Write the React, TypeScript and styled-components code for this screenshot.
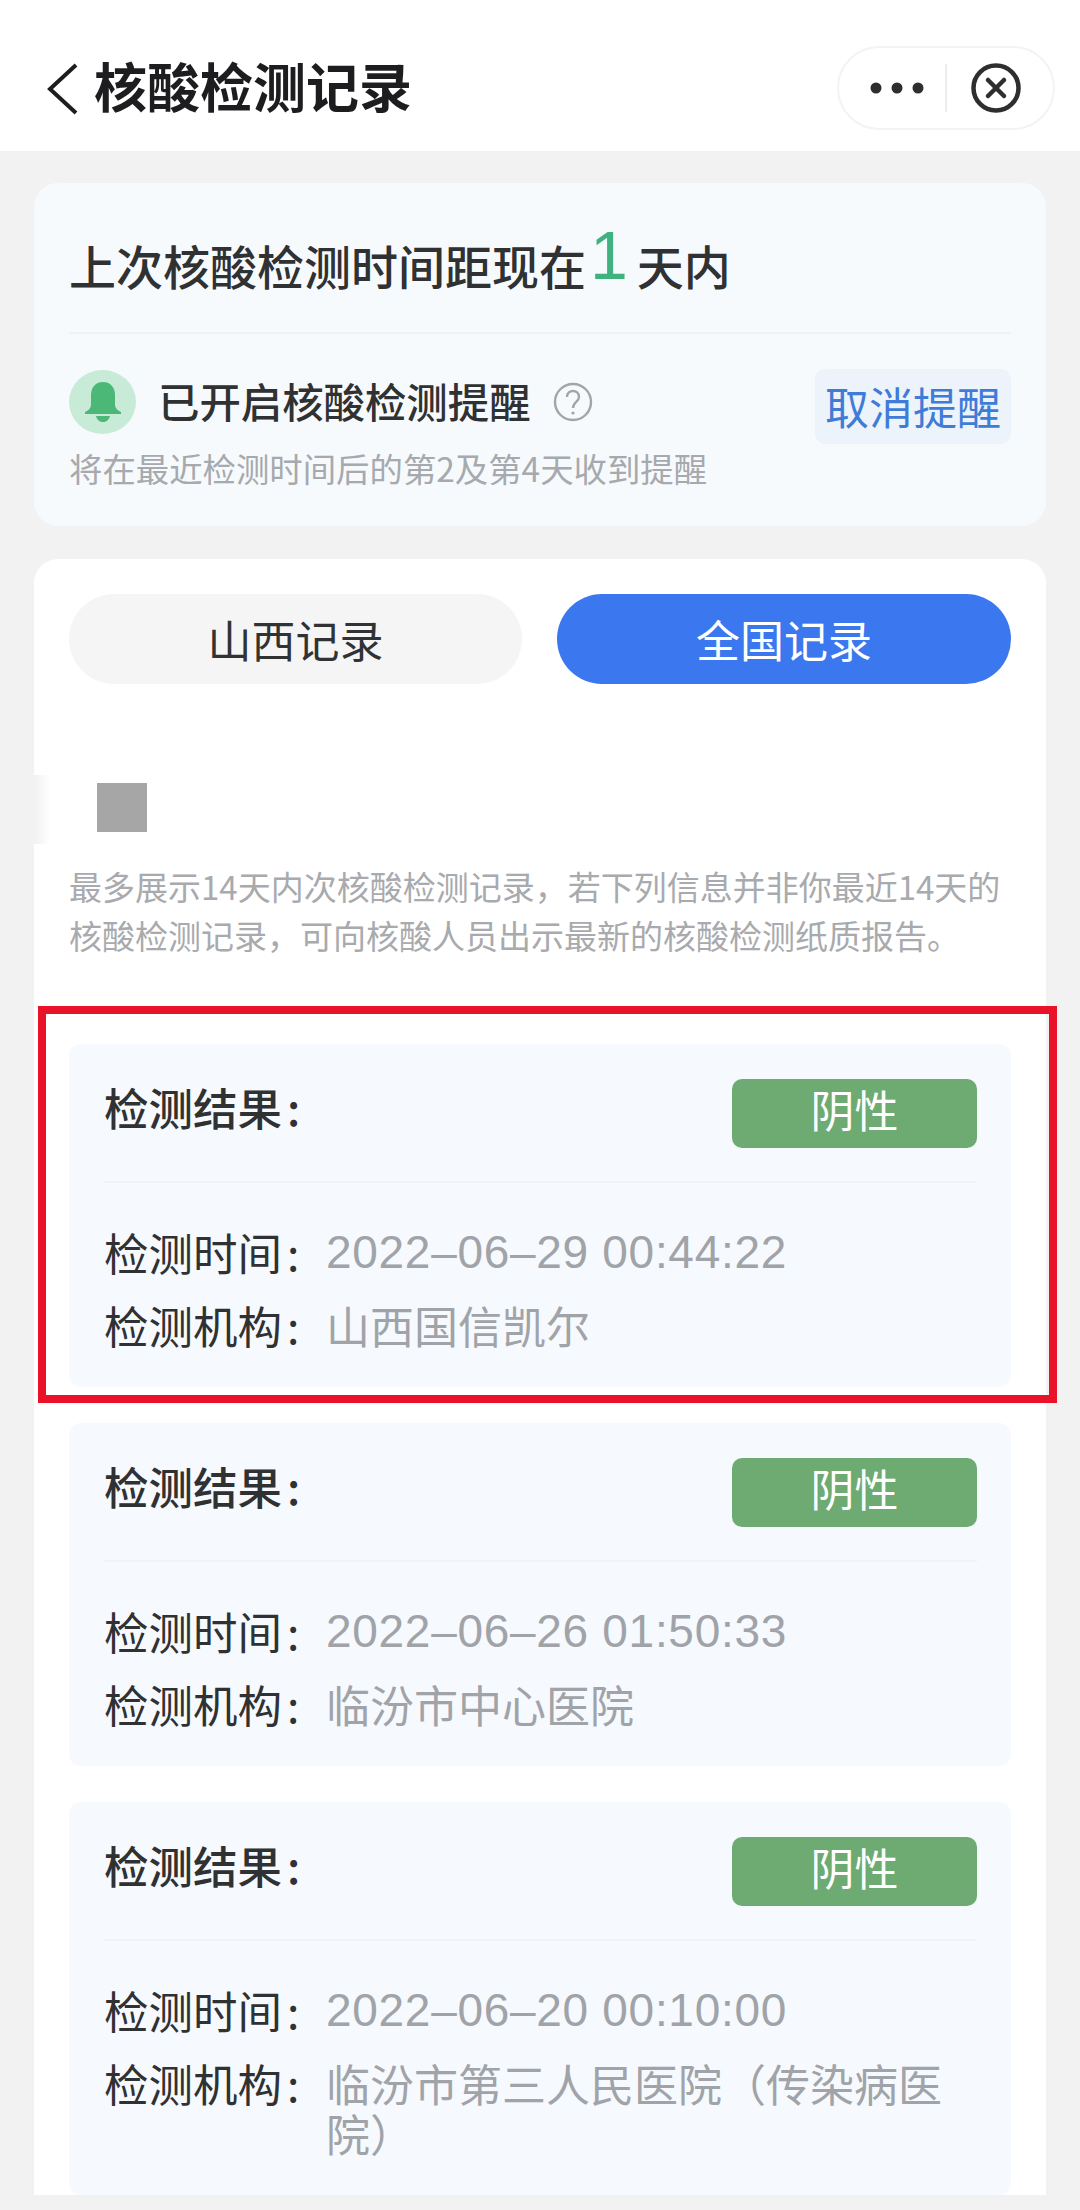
import React from "react";
import styled, { createGlobalStyle } from "styled-components";

const GlobalStyle = createGlobalStyle`
  html, body {
    margin: 0;
    padding: 0;
    height: 2210px;
    overflow: hidden;
    background: #f2f2f2;
  }
  * {
    box-sizing: border-box;
  }
  body {
    font-family: "Noto Sans CJK SC", "Liberation Sans", sans-serif;
    color: #2f3133;
  }
`;

const Header = styled.header`
  height: 151px;
  background: #fff;
  display: flex;
  align-items: center;
  padding: 25px 25px 0 46px;
`;

const BackIcon = styled.svg`
  width: 34px;
  height: 54px;
  margin-right: 14px;
  margin-top: 2px;
  flex: none;
`;

const Title = styled.h1`
  margin: 0 0 7px;
  font-size: 53px;
  line-height: 60px;
  font-weight: 700;
  color: #1d1d1f;
  flex: 1;
`;

const Capsule = styled.div`
  width: 218px;
  height: 84px;
  border: 2px solid #f3f3f3;
  border-radius: 42px;
  display: flex;
  align-items: center;
  padding-left: 31px;
`;

const Dots = styled.svg`
  width: 54px;
  height: 12px;
  flex: none;
`;

const CapsuleDivider = styled.span`
  width: 2px;
  height: 48px;
  background: #ececec;
  margin: 0 24px 0 21px;
  flex: none;
`;

const CloseIcon = styled.svg`
  width: 50px;
  height: 50px;
  flex: none;
`;

const Main = styled.main`
  padding: 32px 34px 0;
  display: flex;
  flex-direction: column;
  gap: 33px;
`;

const SummaryCard = styled.section`
  background: #f7fafd;
  border-radius: 24px;
  padding: 0 35px 38px;
  height: 343px;
`;

const Headline = styled.div`
  height: 151px;
  padding-top: 52px;
  border-bottom: 2px solid #eff1f3;
  font-size: 47px;
  line-height: 60px;
  font-weight: 500;
  white-space: nowrap;
`;

const Days = styled.span`
  display: inline-block;
  font-family: "Liberation Sans", sans-serif;
  font-size: 68px;
  line-height: 0;
  font-weight: 400;
  color: #3fb27f;
  margin: 0 9px 0 4px;
  vertical-align: 6px;
`;

const ReminderRow = styled.div`
  margin-top: 35px;
  display: flex;
  align-items: flex-start;
  justify-content: space-between;
`;

const ReminderLeft = styled.div`
  display: flex;
  align-items: center;
  height: 66px;
`;

const BellBadge = styled.span`
  width: 67px;
  height: 64px;
  border-radius: 50%;
  background: #c8ebd8;
  display: flex;
  align-items: center;
  justify-content: center;
  margin-right: 22px;
`;

const ReminderTitle = styled.span`
  font-size: 41.4px;
  line-height: 52px;
  font-weight: 500;
  white-space: nowrap;
  margin-bottom: 4px;
`;

const HelpIcon = styled.svg`
  width: 40px;
  height: 40px;
  margin-left: 22px;
`;

const CancelButton = styled.button`
  width: 196px;
  height: 75px;
  border: none;
  border-radius: 10px;
  background: #edf3fb;
  color: #3f7cd8;
  font-family: inherit;
  font-size: 44px;
  line-height: 75px;
  padding: 0;
  white-space: nowrap;
`;

const ReminderNote = styled.p`
  margin: 4px 0 0;
  font-size: 33.4px;
  line-height: 40px;
  color: #a6a9ad;
  white-space: nowrap;
`;

const RecordsCard = styled.section`
  background: #fff;
  border-radius: 24px 24px 0 0;
  padding: 35px 35px 0;
  position: relative;
`;

const EdgeSmear = styled.span`
  position: absolute;
  left: 0;
  top: 216px;
  width: 16px;
  height: 69px;
  background: linear-gradient(to right, #f1f1f1, #fff);
`;

const Tabs = styled.div`
  display: grid;
  grid-template-columns: 453px 454px;
  justify-content: space-between;
`;

const Tab = styled.button<{ $active?: boolean }>`
  height: 90px;
  border: none;
  border-radius: 45px;
  background: ${(props) => (props.$active ? "#3b77ee" : "#f5f5f5")};
  color: ${(props) => (props.$active ? "#fff" : "#303234")};
  font-family: inherit;
  font-size: 44px;
  padding: 0;
`;

const MaskedBlock = styled.div`
  width: 50px;
  height: 49px;
  margin: 99px 0 0 28px;
  background: #a6a6a6;
`;

const Notice = styled.p`
  margin: 30px 0 84px;
  font-size: 33px;
  line-height: 49px;
  color: #a8aaae;
`;

const RecordList = styled.div`
  display: flex;
  flex-direction: column;
  gap: 36px;
`;

const RecordCard = styled.article<{ $marked?: boolean }>`
  position: relative;
  background: #f6f9fd;
  border-radius: 12px;
  padding: 35px 34px 37px 35px;
  ${(props) =>
    props.$marked &&
    `&::after {
      content: "";
      position: absolute;
      left: -31px;
      right: -46px;
      top: -38px;
      bottom: -16px;
      border: 8px solid #ea1228;
      pointer-events: none;
    }`}
`;

const ResultRow = styled.div`
  display: flex;
  align-items: flex-start;
  justify-content: space-between;
  height: 104px;
  border-bottom: 2px solid #f0f3f7;
`;

const ResultLabel = styled.span`
  font-size: 44.5px;
  line-height: 56px;
  font-weight: 500;
`;

const Colon = styled.span`
  margin-left: 5px;
`;

const ResultTag = styled.span`
  width: 245px;
  height: 69px;
  border-radius: 10px;
  background: #6dab72;
  color: #fff;
  font-size: 44px;
  line-height: 61px;
  text-align: center;
`;

const InfoList = styled.dl`
  margin: 44px 0 0;
  display: flex;
  flex-direction: column;
  gap: 23px;
`;

const InfoRow = styled.div`
  display: flex;
  line-height: 50px;
`;

const InfoLabel = styled.dt`
  flex: none;
  width: 222px;
  font-size: 44.5px;
  color: #2f3133;
`;

const InfoValue = styled.dd`
  margin: 0;
  flex: 1;
  font-size: 44px;
  color: #a0a3a8;
`;

const TimeValue = styled(InfoValue)`
  font-family: "Liberation Sans", sans-serif;
  font-size: 46px;
  letter-spacing: 0.7px;
`;

const Bell = () => (
  <svg width="36" height="42" viewBox="0 0 36 42">
    <path
      d="M18 1c-8 0-12 6-12 13v9c0 4-2 6-6 8v2h36v-2c-4-2-6-4-6-8v-9C30 7 26 1 18 1z"
      fill="#4cb878"
    />
    <path d="M11 35h14c-1 4-4 6-7 6s-6-2-7-6z" fill="#4cb878" />
  </svg>
);

type RecordItem = {
  time: string;
  org: string;
  marked?: boolean;
};

const records: RecordItem[] = [
  { time: "2022–06–29 00:44:22", org: "山西国信凯尔", marked: true },
  { time: "2022–06–26 01:50:33", org: "临汾市中心医院" },
  { time: "2022–06–20 00:10:00", org: "临汾市第三人民医院（传染病医院）" },
];

const App: React.FC = () => {
  return (
    <>
      <GlobalStyle />
      <Header>
        <BackIcon viewBox="0 0 34 54">
          <path
            d="M30 3L4 27l26 24"
            fill="none"
            stroke="#1d1d1f"
            strokeWidth="4"
          />
        </BackIcon>
        <Title>核酸检测记录</Title>
        <Capsule>
          <Dots viewBox="0 0 54 12">
            <circle cx="6" cy="6" r="5.5" fill="#2e2e2e" />
            <circle cx="27" cy="6" r="5.5" fill="#2e2e2e" />
            <circle cx="48" cy="6" r="5.5" fill="#2e2e2e" />
          </Dots>
          <CapsuleDivider />
          <CloseIcon viewBox="0 0 50 50">
            <circle cx="25" cy="25" r="22.5" fill="none" stroke="#2e2e2e" strokeWidth="4.5" />
            <path
              d="M17 17l16 16M33 17L17 33"
              stroke="#2e2e2e"
              strokeWidth="4.5"
              strokeLinecap="round"
            />
          </CloseIcon>
        </Capsule>
      </Header>
      <Main>
        <SummaryCard>
          <Headline>
            上次核酸检测时间距现在<Days>1</Days>天内
          </Headline>
          <ReminderRow>
            <ReminderLeft>
              <BellBadge>
                <Bell />
              </BellBadge>
              <ReminderTitle>已开启核酸检测提醒</ReminderTitle>
              <HelpIcon viewBox="0 0 40 40">
                <circle cx="20" cy="20" r="18" fill="none" stroke="#a3a5a8" strokeWidth="2.4" />
                <path
                  d="M14 15c0-4 3-6 6-6s6 2 6 6c0 5-6 5-6 11"
                  fill="none"
                  stroke="#a3a5a8"
                  strokeWidth="2.4"
                />
                <circle cx="20" cy="31" r="1.6" fill="#a3a5a8" />
              </HelpIcon>
            </ReminderLeft>
            <CancelButton>取消提醒</CancelButton>
          </ReminderRow>
          <ReminderNote>将在最近检测时间后的第2及第4天收到提醒</ReminderNote>
        </SummaryCard>
        <RecordsCard>
          <EdgeSmear />
          <Tabs>
            <Tab>山西记录</Tab>
            <Tab $active>全国记录</Tab>
          </Tabs>
          <MaskedBlock />
          <Notice>
            最多展示14天内次核酸检测记录，若下列信息并非你最近14天的核酸检测记录，可向核酸人员出示最新的核酸检测纸质报告。
          </Notice>
          <RecordList>
            {records.map((record) => (
              <RecordCard key={record.time} $marked={record.marked}>
                <ResultRow>
                  <ResultLabel>
                    检测结果<Colon>:</Colon>
                  </ResultLabel>
                  <ResultTag>阴性</ResultTag>
                </ResultRow>
                <InfoList>
                  <InfoRow>
                    <InfoLabel>
                      检测时间<Colon>:</Colon>
                    </InfoLabel>
                    <TimeValue>{record.time}</TimeValue>
                  </InfoRow>
                  <InfoRow>
                    <InfoLabel>
                      检测机构<Colon>:</Colon>
                    </InfoLabel>
                    <InfoValue>{record.org}</InfoValue>
                  </InfoRow>
                </InfoList>
              </RecordCard>
            ))}
          </RecordList>
        </RecordsCard>
      </Main>
    </>
  );
};

export default App;
